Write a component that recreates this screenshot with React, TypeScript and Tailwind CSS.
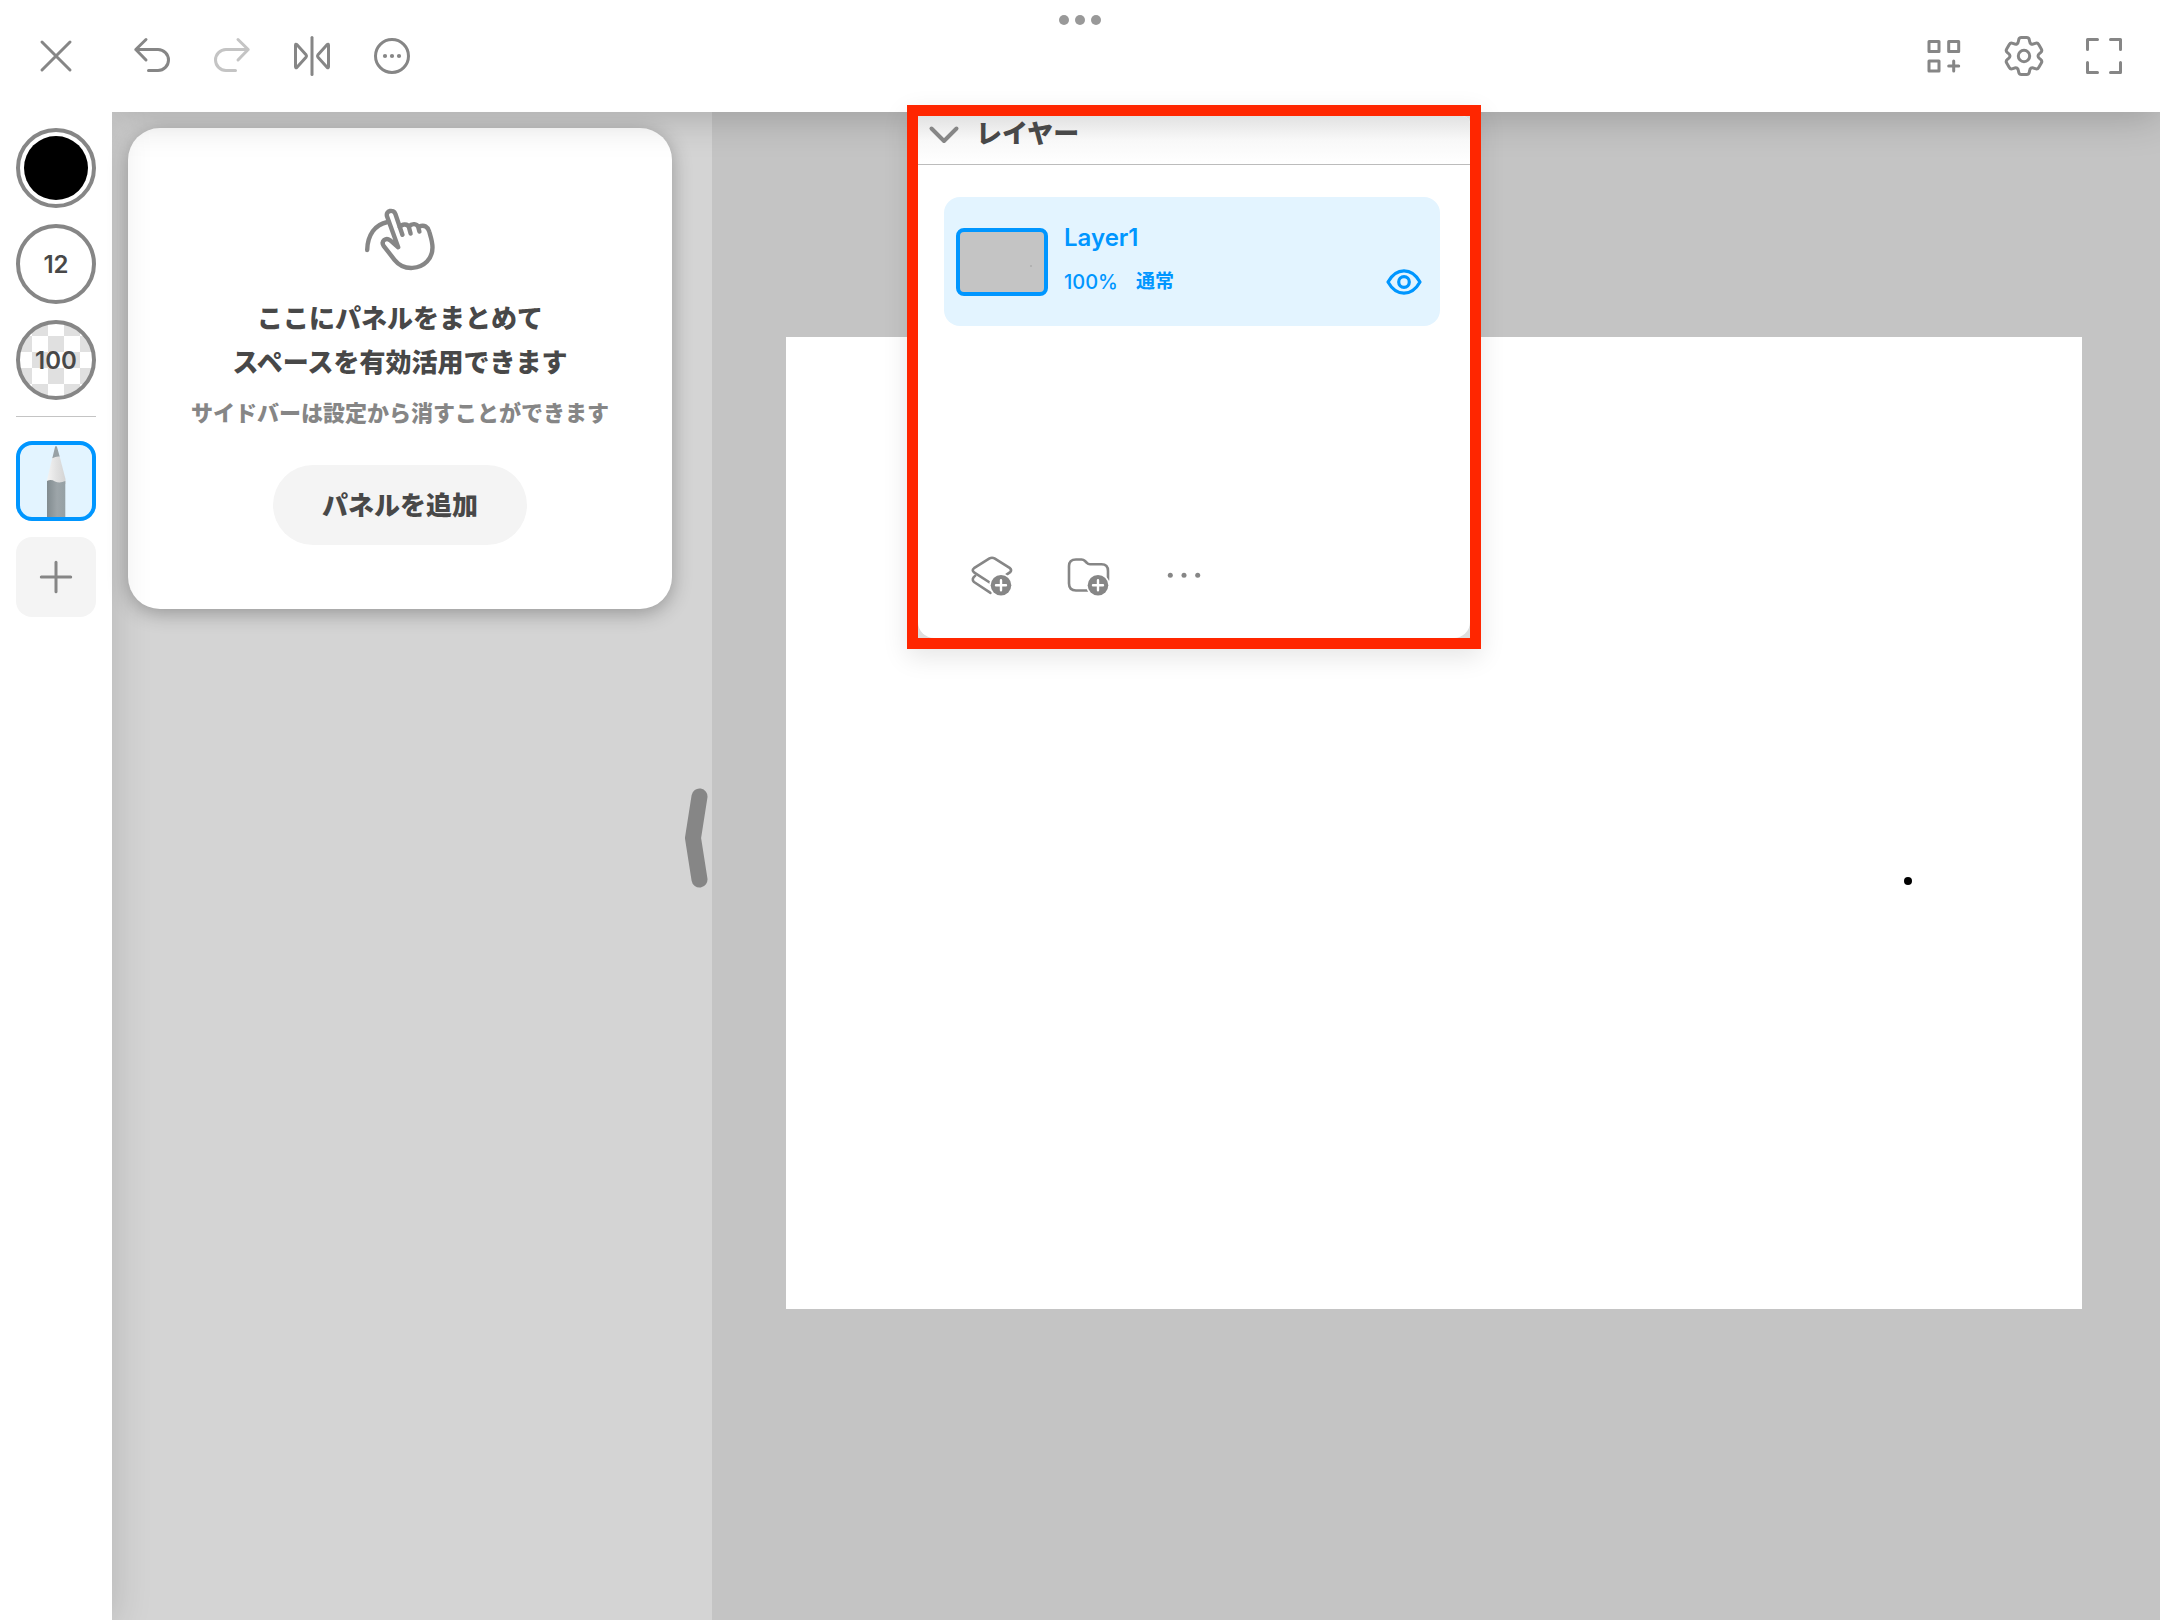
import type { ReactNode } from "react";

function Icon({ children, className = "" }: { children: ReactNode; className?: string }) {
  return (
    <svg
      viewBox="0 0 40 40"
      className={"size-10 " + className}
      fill="none"
      stroke="currentColor"
      strokeWidth="3"
      strokeLinecap="round"
      strokeLinejoin="round"
      aria-hidden="true"
    >
      {children}
    </svg>
  );
}

function gearPath() {
  const tooth = [
    [-5.8, -12.8],
    [-5, -18.5],
    [5, -18.5],
    [5.8, -12.8],
  ];
  const pts: number[][] = [];
  for (let k = 0; k < 6; k++) {
    const a = (k * Math.PI) / 3;
    for (const [x, y] of tooth) {
      pts.push([20 + x * Math.cos(a) - y * Math.sin(a), 20 + x * Math.sin(a) + y * Math.cos(a)]);
    }
  }
  const toward = (p: number[], q: number[], d: number) => {
    const len = Math.hypot(q[0] - p[0], q[1] - p[1]);
    const t = Math.min(d / len, 0.5);
    return [p[0] + (q[0] - p[0]) * t, p[1] + (q[1] - p[1]) * t];
  };
  const f = (p: number[]) => p[0].toFixed(2) + " " + p[1].toFixed(2);
  return (
    pts
      .map((p, i) => {
        const a = toward(p, pts[(i + pts.length - 1) % pts.length], 2.4);
        const b = toward(p, pts[(i + 1) % pts.length], 2.4);
        return (i === 0 ? "M" : "L") + f(a) + "Q" + f(p) + " " + f(b);
      })
      .join("") + "Z"
  );
}

function ToolButton({ label, children, className = "w-20" }: { label: string; children: ReactNode; className?: string }) {
  return (
    <button type="button" aria-label={label} className={"flex h-full items-center justify-center " + className}>
      {children}
    </button>
  );
}

function Header() {
  return (
    <header className="relative flex h-28 shrink-0 items-center justify-between bg-white pr-4 text-[#868686]">
      <div className="flex h-full items-center">
        <ToolButton label="閉じる" className="w-28">
          <Icon>
            <path d="M6 6L34 34M34 6L6 34" />
          </Icon>
        </ToolButton>
        <ToolButton label="取り消す">
          <Icon>
            <path d="M14 3.5L3.8 13.5L14 24M3.8 13.5H26a10.5 10.5 0 0 1 0 21H16.5" />
          </Icon>
        </ToolButton>
        <ToolButton label="やり直す">
          <Icon className="text-[#c4c4c4]">
            <path d="M26 3.5L36.2 13.5L26 24M36.2 13.5H14a10.5 10.5 0 0 0 0 21H23.5" />
          </Icon>
        </ToolButton>
        <ToolButton label="左右反転">
          <Icon>
            <path d="M20 1.5V38.5" />
            <path d="M3.5 9.2Q3.5 7.4 5 8.7L14 18.7Q15 20 14 21.3L5 31.3Q3.5 32.6 3.5 30.8Z" />
            <path d="M36.5 9.2Q36.5 7.4 35 8.7L26 18.7Q25 20 26 21.3L35 31.3Q36.5 32.6 36.5 30.8Z" />
          </Icon>
        </ToolButton>
        <ToolButton label="その他">
          <Icon>
            <circle cx="20" cy="20" r="16.5" />
            <g fill="currentColor" stroke="none">
              <circle cx="13" cy="20" r="2.1" />
              <circle cx="20" cy="20" r="2.1" />
              <circle cx="27" cy="20" r="2.1" />
            </g>
          </Icon>
        </ToolButton>
      </div>
      <div className="absolute top-[15px] left-1/2 flex -translate-x-1/2 gap-1.5">
        <span className="size-2.5 rounded-full bg-[#999999]" />
        <span className="size-2.5 rounded-full bg-[#999999]" />
        <span className="size-2.5 rounded-full bg-[#999999]" />
      </div>
      <div className="flex h-full items-center">
        <ToolButton label="パネル">
          <Icon>
            <rect x="5" y="5.5" width="10" height="10" />
            <rect x="24.7" y="5.5" width="10" height="10" />
            <rect x="5" y="25" width="10" height="10" />
            <path d="M29.7 25V35M24.7 30H34.7" />
          </Icon>
        </ToolButton>
        <ToolButton label="設定">
          <Icon>
            <path d={gearPath()} />
            <circle cx="20" cy="20" r="5.7" />
          </Icon>
        </ToolButton>
        <ToolButton label="全画面">
          <Icon>
            <path d="M3.5 13.5V3.5H13.5M26.5 3.5H36.5V13.5M36.5 26.5V36.5H26.5M13.5 36.5H3.5V26.5" />
          </Icon>
        </ToolButton>
      </div>
    </header>
  );
}

function Pencil() {
  return (
    <svg viewBox="0 0 72 72" className="size-18" aria-hidden="true">
      <defs>
        <linearGradient id="body" x1="0" x2="1" y1="0" y2="0">
          <stop offset="0" stopColor="#818b8f" />
          <stop offset="0.55" stopColor="#9da5a9" />
          <stop offset="1" stopColor="#95a0a4" />
        </linearGradient>
        <linearGradient id="wood" x1="0" x2="1" y1="0" y2="0">
          <stop offset="0" stopColor="#f4f4f4" />
          <stop offset="0.5" stopColor="#e2e2e2" />
          <stop offset="1" stopColor="#d4d4d4" />
        </linearGradient>
      </defs>
      <path d="M32.5 12L39.5 11L45.5 34V39H27V35Z" fill="url(#wood)" />
      <path d="M35 2Q36 0 37 2L39.7 11.5Q36 11 32.3 13.2Z" fill="#98a1a5" />
      <path d="M27 36Q31 34 35 36.5Q40 38.5 45.3 36V72H27Z" fill="url(#body)" />
    </svg>
  );
}

function Sidebar() {
  return (
    <aside className="relative flex w-28 shrink-0 flex-col items-center gap-4 bg-white pt-4 text-2xl font-semibold text-[#484848]">
      <button type="button" aria-label="色" className="flex size-20 items-center justify-center rounded-full border-4 border-[#868686]">
        <span className="size-16 rounded-full bg-black" />
      </button>
      <button type="button" aria-label="ブラシサイズ" className="size-20 rounded-full border-4 border-[#868686] pt-0.5">
        12
      </button>
      <button
        type="button"
        aria-label="不透明度"
        className="size-20 rounded-full border-4 border-[#868686] bg-[repeating-conic-gradient(#e0e0e0_0_25%,#ffffff_0_50%)] bg-[length:32px_32px] bg-origin-border pt-0.5"
      >
        100
      </button>
      <hr className="mb-2 w-20 border-[#c4c4c4]" />
      <button type="button" aria-label="鉛筆" className="size-20 overflow-hidden rounded-2xl border-4 border-[#0096ff] bg-[#e3f4ff]">
        <Pencil />
      </button>
      <button type="button" aria-label="ブラシを追加" className="flex size-20 items-center justify-center rounded-2xl bg-[#f4f4f4] text-[#868686]">
        <Icon>
          <path d="M20 5.3V34.7M5.3 20H34.7" />
        </Icon>
      </button>
    </aside>
  );
}

function Hand() {
  return (
    <svg
      viewBox="0 0 90 75"
      className="h-[75px] w-[90px] text-[#868686]"
      fill="none"
      stroke="currentColor"
      strokeWidth="4.4"
      strokeLinecap="round"
      strokeLinejoin="round"
      aria-hidden="true"
    >
      <path d="M12.2 49C12.5 34 20 23.5 32.5 21" />
      <path d="M47.4 33.8L40.4 13C38.6 7.8 30.4 9.4 32 15.3L43.2 46.3L35 39.2C31 36.2 25.6 40 28.6 44.8L39.5 58.8C44.5 65 50 67.3 57.5 66.9C69.5 66 77.5 57.5 77.5 46.5C77.5 40.5 75.8 36 74.2 30.5C73 26 69.5 23.3 64 25.5" />
      <path d="M44.8 26C47 22.5 53 22.5 54 26.5L55.6 32.5M54 25.5C57 22 62 22.5 63.2 26L64.4 30.5" />
    </svg>
  );
}

function PanelDock() {
  return (
    <section className="flex w-[600px] shrink-0 flex-col bg-[#d4d4d4] pt-4 pl-4">
      <div className="flex w-[544px] flex-col items-center rounded-[32px] bg-white pt-[73px] pb-16 font-black text-[#484848] shadow-[0_4px_20px_rgba(0,0,0,0.3)]">
        <Hand />
        <p className="mt-[21px] text-center text-[26px] leading-[44px]">
          ここにパネルをまとめて
          <br />
          スペースを有効活用できます
        </p>
        <p className="mt-3 text-[22px] leading-8 text-[#868686]">サイドバーは設定から消すことができます</p>
        <button type="button" className="mt-9 h-20 rounded-full bg-[#f4f4f4] px-[49px] text-[26px]">
          パネルを追加
        </button>
      </div>
      <button type="button" aria-label="サイドバーを閉じる" className="mt-[178px] mr-1 self-end text-[#868686]">
        <svg viewBox="0 0 24 102" className="h-[102px] w-6" fill="none" stroke="currentColor" strokeWidth="16" strokeLinecap="round" strokeLinejoin="round" aria-hidden="true">
          <path d="M15.5 9.5L9 51L15.5 92.5" />
        </svg>
      </button>
    </section>
  );
}

function PlusBadge({ cx }: { cx: number }) {
  return (
    <g>
      <circle cx={cx} cy="29.3" r="11.8" fill="#ffffff" stroke="none" />
      <circle cx={cx} cy="29.3" r="10.3" fill="currentColor" stroke="none" />
      <path d={`M${cx} 24.3v10M${cx - 5} 29.3h10`} stroke="#ffffff" strokeWidth="2.4" />
    </g>
  );
}

function LayerPanel() {
  return (
    <section
      aria-label="レイヤー"
      className="absolute -top-[7px] left-[795px] h-[544px] w-[574px] border-[11px] border-[#ff2600] bg-[#dedede] shadow-[0_8px_24px_rgba(0,0,0,0.10)]"
    >
      <div className="flex h-full flex-col rounded-tr-lg rounded-b-[16px] bg-white">
        <h2 className="flex h-[49px] items-center gap-3 rounded-tr-lg border-b border-[#bcbcbc] bg-linear-to-b from-[#e2e2e2] via-[#f8f8f8] to-white pb-3 pl-1.5 text-[26px] leading-8 font-black text-[#484848]">
          <button type="button" aria-label="折りたたむ" className="text-[#868686]">
            <Icon>
              <path d="M7.5 14.5L20 27L32.5 14.5" strokeWidth="4" />
            </Icon>
          </button>
          レイヤー
        </h2>
        <div className="mt-8 mr-[30px] ml-[26px] flex h-[129px] items-center rounded-2xl bg-[#e3f4ff] pr-4 pl-3 text-[#0096ff]">
          <span className="flex h-[68px] w-[92px] items-center justify-end rounded-lg border-4 border-[#0096ff] bg-[#c4c4c4] pr-3">
            <span className="mt-2 size-0.5 rounded-full bg-[#acacac]" />
          </span>
          <div className="ml-4 flex-1 pb-1">
            <p className="text-2xl leading-8 font-semibold">Layer1</p>
            <p className="mt-3 flex gap-[18px] text-xl leading-8 font-medium">
              <span>100%</span>
              <span className="text-[19px] font-bold">通常</span>
            </p>
          </div>
          <button type="button" aria-label="表示" className="mt-[41px]">
            <Icon>
              <path d="M4 20C8.5 12 14 8.9 20 8.9S31.5 12 36 20C31.5 28 26 31.1 20 31.1S8.5 28 4 20Z" strokeWidth="3.2" />
              <circle cx="20" cy="20" r="5.3" strokeWidth="3.2" />
            </Icon>
          </button>
        </div>
        <div className="mt-auto mb-[42px] ml-[54px] flex gap-14 text-[#868686]">
          <button type="button" aria-label="レイヤーを追加">
            <Icon className="overflow-visible">
              <path d="M34.5 18.7L38.2 16.2Q40 14 38 12.2L22.5 2.4Q20 1 17.5 2.4L2 12.2Q-0.500 14 2 16.4L20 28" strokeWidth="2.6" />
              <path d="M3.2 19.8Q-1 23 2 26L18.5 36.8" strokeWidth="2.6" />
              <PlusBadge cx={29} />
            </Icon>
          </button>
          <button type="button" aria-label="フォルダを追加">
            <Icon className="overflow-visible">
              <path d="M20 34.5H8Q1 34.500 1 27.500V10Q1 3.500 8 3.500H13.500Q15.500 3.500 17 5L19 7Q20 8.300 22 8.300H33.500Q40 8.300 40 15V24" strokeWidth="2.600" />
              <PlusBadge cx={30} />
            </Icon>
          </button>
          <button type="button" aria-label="その他の操作">
            <Icon>
              <g fill="currentColor" stroke="none">
                <circle cx="6.300" cy="19.300" r="2.500" />
                <circle cx="20" cy="19.300" r="2.500" />
                <circle cx="33.700" cy="19.300" r="2.500" />
              </g>
            </Icon>
          </button>
        </div>
      </div>
    </section>
  );
}

export default function App() {
  return (
    <div className="flex min-h-screen flex-col bg-white font-['Inter','Noto_Sans_CJK_JP',sans-serif]">
      <Header />
      <div className="flex flex-1">
        <Sidebar />
        <main className="relative flex flex-1">
          <PanelDock />
          <div className="flex-1 bg-[#c4c4c4] pt-[225px] pr-[78px] pl-[74px]">
            <div className="relative aspect-[4/3] bg-white">
              <span className="absolute top-[56%] left-[86.6%] size-2 -translate-x-1/2 -translate-y-1/2 rounded-full bg-black" />
            </div>
          </div>
          <div className="pointer-events-none absolute inset-0 overflow-hidden">
            <div className="absolute inset-x-0 bottom-full h-28 shadow-[0_4px_40px_rgba(0,0,0,0.22)]" />
            <div className="absolute inset-y-0 right-full w-28 shadow-[0_4px_40px_rgba(0,0,0,0.16)]" />
          </div>
          <LayerPanel />
        </main>
      </div>
    </div>
  );
}
